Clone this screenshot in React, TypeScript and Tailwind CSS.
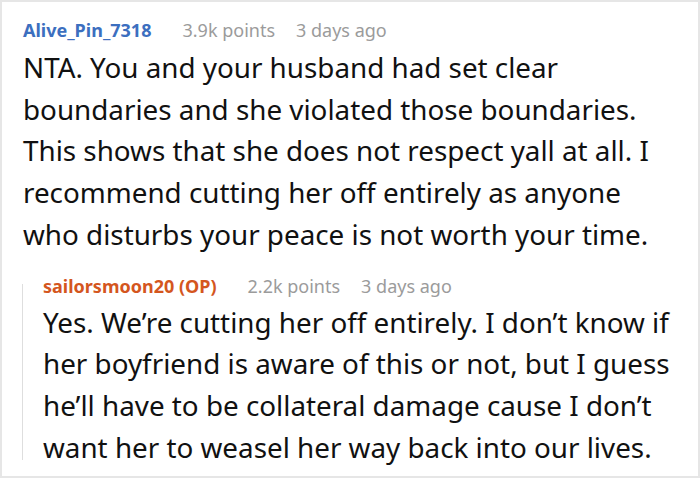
const meta = "text-[#9b9b9b]";

export default function App() {
  return (
    <div className="w-[700px] h-[478px] bg-white border-2 border-[#e6e6e6] overflow-hidden" style={{ fontFamily: '"Noto Sans", sans-serif' }}>
      <div className="pl-[21px] pt-[14px]">
        <div className="flex items-baseline gap-[21px] text-[18px] leading-[28px] mb-[3px]">
          <span className="font-bold text-[#3c6fbf] mr-[10px]">Alive_Pin_7318</span>
          <span className={meta}>3.9k points</span>
          <span className={meta}>3 days ago</span>
        </div>
        <p className="text-[27.8px] leading-[41.7px] text-[#111] whitespace-nowrap">
          NTA. You and your husband had set clear<br />
          boundaries and she violated those boundaries.<br />
          This shows that she does not respect yall at all. I<br />
          recommend cutting her off entirely as anyone<br />
          who disturbs your peace is not worth your time.
        </p>
      </div>
      <div className="flex ml-[20px] mt-[16px]">
        <div className="w-px bg-[#dedede] mt-[12px] mb-[8px]" />
        <div className="pl-[20px]">
          <div className="flex items-baseline gap-[21px] text-[18px] leading-[28px] mb-[2px]">
            <span className="font-bold text-[#d4561e] mr-[10px]">sailorsmoon20 (OP)</span>
            <span className={meta}>2.2k points</span>
            <span className={meta}>3 days ago</span>
          </div>
          <p className="text-[27.8px] leading-[41.7px] text-[#111] whitespace-nowrap">
            Yes. We’re cutting her off entirely. I don’t know if<br />
            her boyfriend is aware of this or not, but I guess<br />
            he’ll have to be collateral damage cause I don’t<br />
            want her to weasel her way back into our lives.
          </p>
        </div>
      </div>
    </div>
  );
}
